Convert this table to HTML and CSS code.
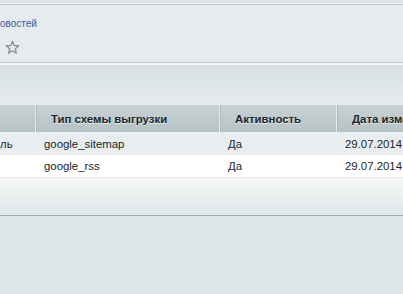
FILE: index.html
```html
<!DOCTYPE html>
<html lang="ru">
<head>
<meta charset="utf-8">
<link rel="stylesheet" href="styles.css">
</head>
<body>
<div class="page">
  <div class="top-strip"></div>
  <div class="panel">
    <a class="crumb" href="#">овостей</a>
    <svg class="star" width="15" height="15" viewBox="0 0 14 14">
      <path d="M7 1.2 L8.6 5.1 L12.8 5.4 L9.6 8.1 L10.6 12.3 L7 10 L3.4 12.3 L4.4 8.1 L1.2 5.4 L5.4 5.1 Z" fill="none" stroke="#8795a0" stroke-width="1.3" stroke-linejoin="round"/>
    </svg>
  </div>
  <div class="toolbar"></div>
  <div class="grid-wrap">
    <table class="grid">
      <colgroup>
        <col class="c0"><col class="c1"><col class="c2"><col class="c3">
      </colgroup>
      <thead>
        <tr>
          <th class="first"></th>
          <th>Тип схемы выгрузки</th>
          <th>Активность</th>
          <th>Дата изменения</th>
        </tr>
      </thead>
      <tbody>
        <tr class="odd">
          <td class="first">ль</td>
          <td>google_sitemap</td>
          <td>Да</td>
          <td>29.07.2014 12:00:00</td>
        </tr>
        <tr class="even">
          <td class="first"></td>
          <td>google_rss</td>
          <td>Да</td>
          <td>29.07.2014 12:00:00</td>
        </tr>
      </tbody>
    </table>
  </div>
  <div class="footer-bar"></div>
</div>
</body>
</html>
```

FILE: styles.css
```css
html, body {
  margin: 0;
  padding: 0;
  background: #dfe6e8;
  font-family: "Liberation Sans", Arial, sans-serif;
  overflow: hidden;
}

.page {
  width: 403px;
  overflow: hidden;
}

.top-strip {
  height: 3px;
  background: #dde4e6;
  border-bottom: 1px solid #f7f9f9;
}

.panel {
  height: 57px;
  border-top: 1px solid #b7c2c6;
  border-bottom: 1px solid #bcc6c9;
  background: #e6ecee;
  display: flex;
  flex-direction: column;
  align-items: flex-start;
}

.crumb {
  margin-top: 13px;
  font-size: 10px;
  color: #3d58a6;
  text-decoration: none;
  line-height: 12px;
}

.star {
  margin-top: 10px;
  margin-left: 5px;
}

.toolbar {
  height: 40px;
  border-top: 2px solid #f3f6f7;
  background: linear-gradient(#d6dee0, #e2e8ea 60%, #e4eaec);
}

.grid-wrap {
  width: 403px;
  overflow: hidden;
}

.grid {
  width: 520px;
  border-collapse: separate;
  border-spacing: 0;
  table-layout: fixed;
  font-size: 11.4px;
}

.c0 { width: 35px; }
.c1 { width: 184px; }
.c2 { width: 117px; }
.c3 { width: 184px; }

.grid th {
  height: 27px;
  padding: 0 0 0 15px;
  text-align: left;
  font-weight: bold;
  color: #18252b;
  text-shadow: 0 1px 0 rgba(255, 255, 255, 0.7);
  background: linear-gradient(#c9d2d5, #b6c2c5);
  border-left: 1px solid #e9eef0;
  box-shadow: inset 1px 0 0 #a9b5b9;
  border-bottom: 1px solid #eef2f3;
  white-space: nowrap;
  overflow: hidden;
}

.grid th.first {
  border-left: none;
  box-shadow: none;
  padding: 0;
}

.grid td {
  height: 22px;
  padding: 0 0 0 9px;
  color: #1e1e1e;
  white-space: nowrap;
  overflow: hidden;
}

.grid td.first {
  padding: 0;
}

.grid tr.odd td {
  background: #e8eef0;
}

.grid tr.even td {
  background: #ffffff;
}

.footer-bar {
  height: 37px;
  border-top: 1px solid #e1e7e9;
  border-bottom: 1px solid #9ca8ac;
  background: linear-gradient(#f6f8f8, #dfe6e8);
}
```
